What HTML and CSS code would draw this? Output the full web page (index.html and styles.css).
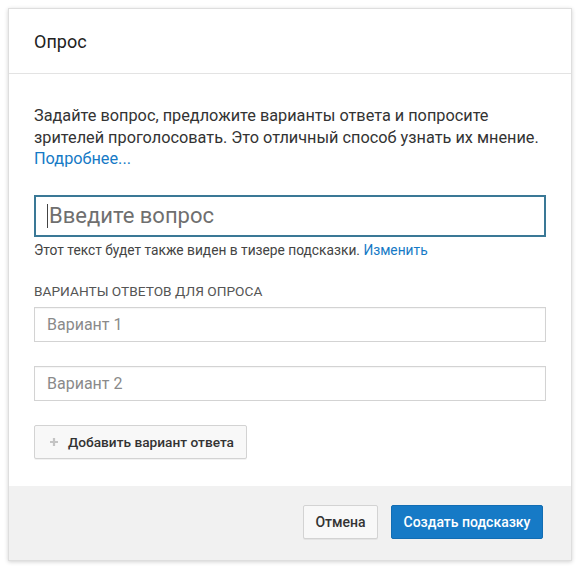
FILE: index.html
```html
<!DOCTYPE html>
<html lang="ru">
<head>
<meta charset="utf-8">
<link rel="stylesheet" href="styles.css">
</head>
<body>
<div class="dialog">
  <div class="dialog-header">Опрос</div>
  <div class="dialog-body">
    <p class="intro">Задайте вопрос, предложите варианты ответа и попросите<br>зрителей проголосовать. Это отличный способ узнать их мнение.<br><a class="link" href="#">Подробнее...</a></p>
    <div class="question-field">
      <span class="caret"></span>
      <input class="question-input" type="text" placeholder="Введите вопрос">
    </div>
    <p class="hint">Этот текст будет также виден в тизере подсказки. <a class="link" href="#">Изменить</a></p>
    <div class="section-label">ВАРИАНТЫ ОТВЕТОВ ДЛЯ ОПРОСА</div>
    <div class="options">
      <input class="option-input" type="text" placeholder="Вариант 1">
      <input class="option-input" type="text" placeholder="Вариант 2">
    </div>
    <button class="add-btn" type="button">
      <svg class="plus" width="10" height="10" viewBox="0 0 10 10"><path d="M5 1v8M1 5h8" stroke="#c4c4c4" stroke-width="2.2"/></svg>
      <span>Добавить вариант ответа</span>
    </button>
  </div>
  <div class="dialog-footer">
    <button class="btn btn-default" type="button">Отмена</button>
    <button class="btn btn-primary" type="button">Создать подсказку</button>
  </div>
</div>
</body>
</html>
```
FILE: styles.css
```css
* { box-sizing: border-box; }
html, body {
  margin: 0;
  padding: 0;
  background: #ffffff;
  font-family: Roboto, "Noto Sans", Arial, sans-serif;
}
body { padding: 8px 7px 7px 8px; }
.dialog {
  width: 564px;
  height: 553px;
  background: #fff;
  border: 1px solid #dedede;
  box-shadow: 0 1px 4px rgba(0,0,0,0.18);
  display: flex;
  flex-direction: column;
}
.dialog-header {
  height: 65px;
  padding: 0 25px;
  display: flex;
  align-items: center;
  font-size: 18px;
  color: #222;
  border-bottom: 1px solid #e3e3e3;
}
.dialog-body {
  flex: 1;
  padding: 31px 25px 0 25px;
}
.intro {
  margin: 0;
  font-size: 16.3px;
  line-height: 21.5px;
  color: #333;
  white-space: nowrap;
}
.link { color: #167ac6; text-decoration: none; }
.question-field {
  margin-top: 25px;
  height: 42px;
  border: 2px solid #3a7896;
  display: flex;
  align-items: center;
  padding-left: 11px;
}
.caret {
  width: 1px;
  height: 24px;
  background: #444;
  margin-right: 1px;
}
.question-input {
  border: 0;
  outline: none;
  padding: 0;
  flex: 1;
  font-family: inherit;
  font-size: 22px;
  color: #333;
  background: transparent;
}
.question-input::placeholder { color: #6f6f6f; }
.hint {
  margin: 5px 0 0 0;
  font-size: 13.75px;
  line-height: 17px;
  color: #444;
}
.section-label {
  margin-top: 24px;
  font-size: 13.7px;
  line-height: 16px;
  color: #555;
}
.options {
  margin-top: 8px;
  display: flex;
  flex-direction: column;
  gap: 24px;
}
.option-input {
  height: 35px;
  width: 100%;
  border: 1px solid #d3d3d3;
  box-shadow: inset 0 1px 1px rgba(0,0,0,0.04);
  padding: 0 12px;
  font-family: inherit;
  font-size: 16px;
  outline: none;
}
.option-input::placeholder { color: #8a8a8a; }
.add-btn {
  margin-top: 24px;
  height: 34px;
  width: 213px;
  padding: 0 0 0 14px;
  display: inline-flex;
  align-items: center;
  gap: 9px;
  background: #f8f8f8;
  border: 1px solid #d3d3d3;
  box-shadow: 0 1px 0 rgba(0,0,0,0.05);
  border-radius: 2px;
  font-family: inherit;
  font-size: 13.7px;
  font-weight: 500;
  color: #333;
}
.dialog-footer {
  height: 74px;
  background: #f1f1f1;
  display: flex;
  justify-content: flex-end;
  align-items: flex-start;
  padding: 19px 28px 0 0;
  gap: 13px;
}
.btn {
  height: 34px;
  padding: 0;
  border-radius: 2px;
  font-family: inherit;
  font-size: 14px;
  font-weight: 500;
}
.btn-default {
  background: #f8f8f8;
  border: 1px solid #d3d3d3;
  color: #333;
  box-shadow: 0 1px 0 rgba(0,0,0,0.05);
  width: 75px;
}
.btn-primary {
  background: #167ac6;
  border: 1px solid #126db3;
  color: #fff;
  width: 152px;
}
```
